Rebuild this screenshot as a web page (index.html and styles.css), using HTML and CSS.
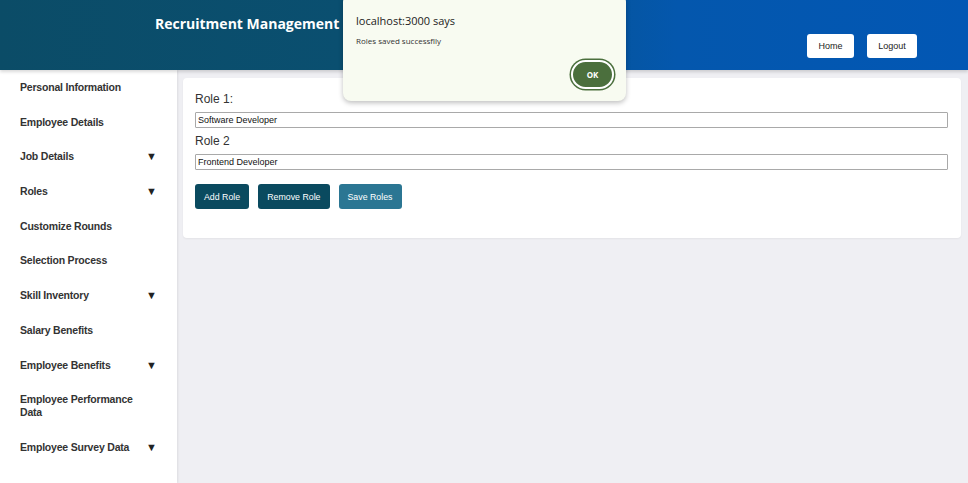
FILE: index.html
```html
<!DOCTYPE html>
<html>
<head>
<meta charset="utf-8">
<link rel="stylesheet" href="styles.css">
</head>
<body>
<div class="app">
  <header class="topbar">
    <h1 class="title">Recruitment Management</h1>
    <nav class="top-actions">
      <button class="top-btn">Home</button>
      <button class="top-btn">Logout</button>
    </nav>
  </header>
  <div class="body-row">
    <aside class="sidebar">
      <div class="nav-item">Personal Information</div>
      <div class="nav-item">Employee Details</div>
      <div class="nav-item"><span>Job Details</span><span class="caret">▼</span></div>
      <div class="nav-item"><span>Roles</span><span class="caret">▼</span></div>
      <div class="nav-item">Customize Rounds</div>
      <div class="nav-item">Selection Process</div>
      <div class="nav-item"><span>Skill Inventory</span><span class="caret">▼</span></div>
      <div class="nav-item">Salary Benefits</div>
      <div class="nav-item"><span>Employee Benefits</span><span class="caret">▼</span></div>
      <div class="nav-item"><span class="wrap">Employee Performance Data</span></div>
      <div class="nav-item"><span>Employee Survey Data</span><span class="caret">▼</span></div>
    </aside>
    <main class="main">
      <section class="card">
        <label class="role-label">Role 1:</label>
        <input class="role-input" type="text" value="Software Developer">
        <label class="role-label">Role 2</label>
        <input class="role-input" type="text" value="Frontend Developer">
        <div class="actions">
          <button class="btn btn-dark">Add Role</button>
          <button class="btn btn-dark">Remove Role</button>
          <button class="btn btn-light">Save Roles</button>
        </div>
      </section>
    </main>
  </div>
</div>
<div class="dialog">
  <div class="dialog-title">localhost:3000 says</div>
  <div class="dialog-msg">Roles saved successflly</div>
  <div class="dialog-foot">
    <button class="ok-btn">OK</button>
  </div>
</div>
</body>
</html>
```
FILE: styles.css
```css
* { box-sizing: border-box; }
html, body { margin: 0; padding: 0; }
body {
  width: 968px;
  height: 483px;
  overflow: hidden;
  font-family: "Liberation Sans", Arial, sans-serif;
  background: #efeff3;
  position: relative;
}
.app {
  display: flex;
  flex-direction: column;
  height: 483px;
}
.topbar {
  height: 70px;
  flex: none;
  display: flex;
  justify-content: space-between;
  background: linear-gradient(90deg, #0b4c67 0%, #0a4f70 35%, #0457ad 70%, #0257b4 100%);
  box-shadow: 0 2px 3px rgba(0,0,0,0.15);
  position: relative;
  z-index: 2;
}
.title {
  margin: 14px 0 0 155px;
  color: #fff;
  font-family: "Open Sans", "Liberation Sans", sans-serif;
  font-weight: 700;
  font-size: 14px;
  line-height: 20px;
  white-space: nowrap;
}
.top-actions {
  display: flex;
  gap: 13px;
  margin: 34px 51px 0 0;
  align-items: flex-start;
}
.top-btn {
  height: 24px;
  border: none;
  border-radius: 3px;
  background: #fff;
  color: #222;
  font-family: "Liberation Sans", Arial, sans-serif;
  font-size: 9px;
  padding: 0;
  width: 47px;
}
.top-btn + .top-btn { width: 50px; }
.body-row {
  flex: 1;
  display: flex;
}
.sidebar {
  width: 177px;
  flex: none;
  background: #fff;
  box-shadow: 1px 0 2px rgba(0,0,0,0.08);
}
.nav-item {
  display: flex;
  justify-content: space-between;
  align-items: flex-start;
  padding: 11px 20px 10.7px 20px;
  font-size: 10.5px;
  letter-spacing: -0.2px;
  line-height: 13px;
  font-weight: 700;
  color: #333;
}
.nav-item .wrap { width: 125px; }
.caret { font-size: 11px; line-height: 13px; color: #222; letter-spacing: 0; }
.main {
  flex: 1;
  padding: 8px 7px 0 6px;
}
.card {
  background: #fff;
  border-radius: 4px;
  height: 160px;
  padding: 14px 13px 0 12px;
  display: flex;
  flex-direction: column;
  box-shadow: 0 1px 2px rgba(0,0,0,0.05);
}
.role-label {
  font-size: 12px;
  line-height: 14px;
  color: #333;
}
.role-input {
  margin-top: 6px;
  height: 16px;
  border: 1px solid #a9a9a9;
  border-radius: 1px;
  padding: 0 2px;
  font-family: "Liberation Sans", Arial, sans-serif;
  font-size: 9px;
  color: #111;
}
.role-input + .role-label { margin-top: 6px; }
.actions {
  display: flex;
  gap: 9px;
  margin-top: 14px;
}
.btn {
  height: 25px;
  border: none;
  border-radius: 3px;
  color: #fff;
  font-family: "Liberation Sans", Arial, sans-serif;
  font-size: 8.8px;
  padding: 0 9px;
}
.btn-dark { background: #0a4a5f; }
.btn-light { background: #2b7693; }
.dialog {
  position: absolute;
  left: 343px;
  top: -6px;
  width: 283px;
  height: 107px;
  background: #f8fbf1;
  border-radius: 8px;
  box-shadow: 0 2px 5px rgba(0,0,0,0.25);
  padding: 20px 12px 0 13px;
  z-index: 10;
  font-family: "Open Sans", "Liberation Sans", sans-serif;
}
.dialog-title {
  font-size: 11px;
  line-height: 14px;
  color: #1c1c1c;
}
.dialog-msg {
  margin-top: 7px;
  font-size: 8px;
  line-height: 11px;
  color: #333;
}
.dialog-foot {
  display: flex;
  justify-content: flex-end;
  margin-top: 14px;
}
.ok-btn {
  width: 43px;
  height: 29px;
  border-radius: 15px;
  background: #4b6f3d;
  border: 2px solid #fff;
  box-shadow: 0 0 0 1.5px #4b6f3d;
  color: #fff;
  font-family: "Open Sans", "Liberation Sans", sans-serif;
  font-weight: 700;
  font-size: 8px;
}
```
